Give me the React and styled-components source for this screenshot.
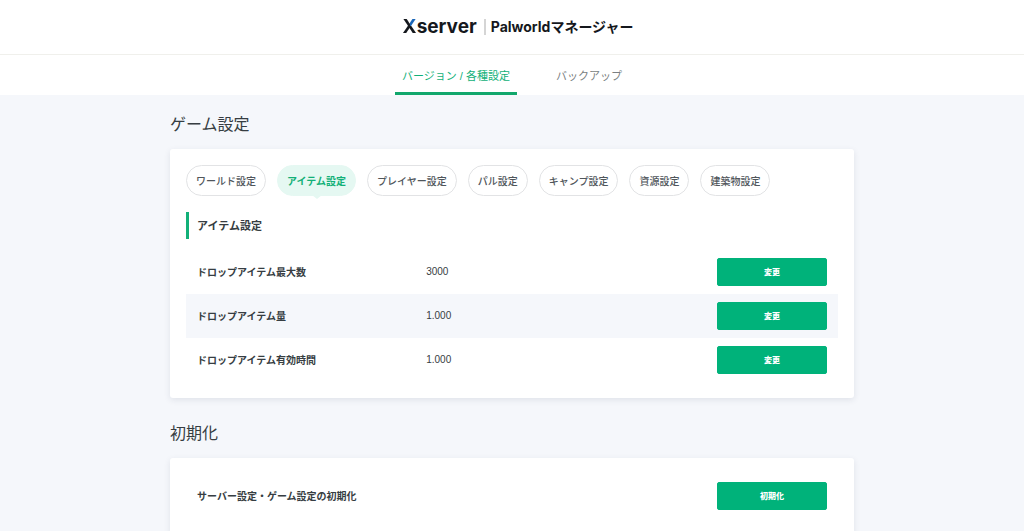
import React, { useState } from "react";
import styled, { createGlobalStyle } from "styled-components";

const navItems = ["バージョン / 各種設定", "バックアップ"];

const categories = [
  "ワールド設定",
  "アイテム設定",
  "プレイヤー設定",
  "パル設定",
  "キャンプ設定",
  "資源設定",
  "建築物設定",
];

const itemSettings = [
  { label: "ドロップアイテム最大数", value: "3000" },
  { label: "ドロップアイテム量", value: "1.000" },
  { label: "ドロップアイテム有効時間", value: "1.000" },
];

const SettingRow = ({ label, value, action }) => (
  <Row>
    <Label scope="row">{label}</Label>
    <Value>{value}</Value>
    <Action>
      <Button type="button" aria-label={`${label} ${action}`}>
        {action}
      </Button>
    </Action>
  </Row>
);

const App = () => {
  const [page, setPage] = useState(navItems[0]);
  const [category, setCategory] = useState("アイテム設定");

  return (
    <>
      <GlobalStyle />
      <Header>
        <Logo href="#">
          <Brand>
            <BrandX>X</BrandX>server
          </Brand>
          <Product>Palworldマネージャー</Product>
        </Logo>
      </Header>
      <Nav>
        {navItems.map((item) => (
          <NavLink key={item} href="#" $active={item === page} onClick={() => setPage(item)}>
            {item}
          </NavLink>
        ))}
      </Nav>
      <Main>
        <section>
          <Title>ゲーム設定</Title>
          <Card>
            <Pills>
              {categories.map((name) => (
                <Pill key={name} type="button" $active={name === category} onClick={() => setCategory(name)}>
                  {name}
                </Pill>
              ))}
            </Pills>
            <Subtitle>{category}</Subtitle>
            <Table>
              <tbody>
                {itemSettings.map((item) => (
                  <SettingRow key={item.label} {...item} action="変更" />
                ))}
              </tbody>
            </Table>
          </Card>
        </section>
        <section>
          <Title>初期化</Title>
          <Card>
            <Table>
              <tbody>
                <SettingRow label="サーバー設定・ゲーム設定の初期化" action="初期化" />
              </tbody>
            </Table>
          </Card>
        </section>
      </Main>
    </>
  );
};

export default App;

const GlobalStyle = createGlobalStyle`
  * {
    box-sizing: border-box;
  }

  body {
    margin: 0;
    background-color: #f5f7fb;
    color: #363d42;
    font-family: "Liberation Sans", "Noto Sans CJK JP", sans-serif;
    font-size: 10px;
  }

  button {
    font-family: inherit;
    cursor: pointer;
  }
`;

const Header = styled.header`
  display: flex;
  align-items: center;
  justify-content: center;
  height: 55px;
  background-color: white;
  border-bottom: 1px solid #f0f0ec;
`;

const Logo = styled.a`
  display: flex;
  align-items: center;
  gap: 7px;
  padding-left: 12px;
  color: #15181d;
  font-family: Inter, "Noto Sans CJK JP", sans-serif;
  font-weight: bold;
  line-height: 16px;
  text-decoration: none;
`;

const Brand = styled.span`
  font-size: 19px;
`;

const BrandX = styled.span`
  background: conic-gradient(#1a66b8 0deg 80deg, #15181d 80deg 360deg);
  background-clip: text;
  color: transparent;
`;

const Product = styled.span`
  padding-left: 5px;
  border-left: 2px solid #d5d5d5;
  font-size: 14px;
`;

const Nav = styled.nav`
  display: flex;
  justify-content: center;
  gap: 32px;
  height: 40px;
  background-color: white;
`;

const NavLink = styled.a`
  display: flex;
  align-items: center;
  padding: 2px 7px 0;
  border-bottom: 3px solid ${({ $active }) => ($active ? "#12a76c" : "transparent")};
  color: ${({ $active }) => ($active ? "#12b078" : "#7b7f82")};
  font-size: 11px;
  text-decoration: none;
`;

const Main = styled.main`
  display: flex;
  flex-direction: column;
  gap: 24px;
  max-width: 716px;
  margin: 0 auto;
  padding: 18px 16px 0;
`;

const Title = styled.h2`
  margin: 0 0 12px;
  font-size: 16px;
  font-weight: normal;
  line-height: 24px;
`;

const Card = styled.div`
  padding: 16px;
  border-radius: 3px;
  background-color: white;
  box-shadow: 0 2px 6px rgba(40, 50, 80, 0.1);
`;

const Pills = styled.div`
  display: flex;
  flex-wrap: wrap;
  gap: 11px;
  margin-bottom: 16px;
`;

const Pill = styled.button`
  position: relative;
  height: 31px;
  padding: 0 9px 1px;
  border: 1px solid ${({ $active }) => ($active ? "#e5f8f2" : "#e2e3e5")};
  border-radius: 16px;
  background-color: ${({ $active }) => ($active ? "#e5f8f2" : "white")};
  color: ${({ $active }) => ($active ? "#12b078" : "#50565b")};
  font-size: 10px;
  font-weight: ${({ $active }) => ($active ? "bold" : 500)};

  &::after {
    content: "";
    display: ${({ $active }) => ($active ? "block" : "none")};
    position: absolute;
    top: 100%;
    left: 50%;
    margin-left: -5px;
    border: 5px solid transparent;
    border-top: 4px solid #e5f8f2;
    border-bottom: none;
  }
`;

const Subtitle = styled.h3`
  margin: 0 0 11px;
  padding: 2px 0 0 8px;
  border-left: 3px solid #12b078;
  font-size: 11px;
  font-weight: bold;
  line-height: 25px;
`;

const Table = styled.table`
  width: 100%;
  border-collapse: collapse;
  table-layout: fixed;
`;

const Row = styled.tr`
  height: 44px;

  &:nth-child(even) {
    background-color: #f5f7fb;
  }
`;

const Label = styled.th`
  width: 35%;
  padding: 0 0 2px 11px;
  font-size: 10px;
  font-weight: bold;
  text-align: left;
  white-space: nowrap;
`;

const Value = styled.td`
  padding: 0 12px 2px;
  font-size: 10px;
`;

const Action = styled.td`
  width: 132px;
  padding: 0 11px;
`;

const Button = styled.button`
  display: block;
  width: 100%;
  height: 28px;
  padding: 0 0 2px;
  border: 1px solid #00b27a;
  border-radius: 2px;
  background-color: #00b27a;
  color: white;
  font-size: 8px;
  font-weight: 900;
`;
